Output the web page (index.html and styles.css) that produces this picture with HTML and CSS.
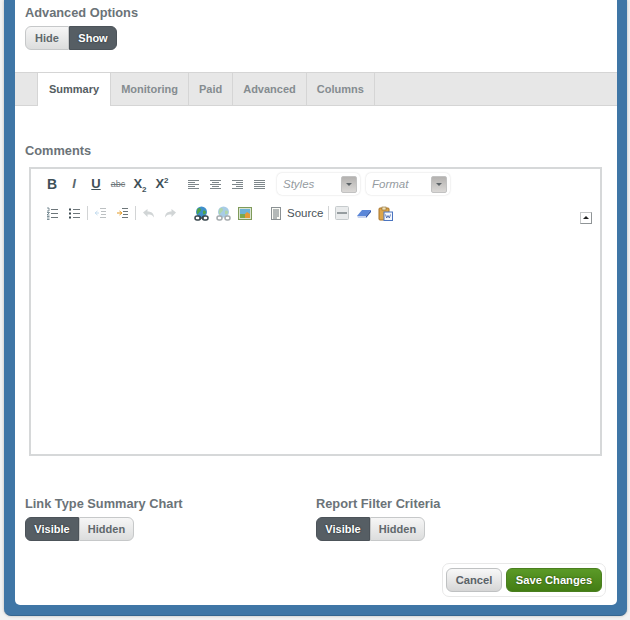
FILE: index.html
```html
<!DOCTYPE html>
<html>
<head>
    <title>Edit Report</title>
    <link rel="stylesheet" href="styles.css">
</head>
<body>
    <div class="frame">
        <div class="panel">
            <div class="field-label">Advanced Options</div>
            <div class="toggle">
                <span class="toggle-btn btn-hide">Hide</span>
                <span class="toggle-btn btn-show active">Show</span>
            </div>

            <div class="tabs">
                <span class="tab-spacer"></span>
                <span class="tab current">Summary</span>
                <span class="tab">Monitoring</span>
                <span class="tab">Paid</span>
                <span class="tab">Advanced</span>
                <span class="tab">Columns</span>
            </div>

            <div class="field-label comments-label">Comments</div>
            <div class="editor">
                <div class="toolbar-row">
                    <div class="tool-group">
                        <span class="tool fmt fmt-b">B</span>
                        <span class="tool fmt fmt-i">I</span>
                        <span class="tool fmt fmt-u">U</span>
                        <span class="tool fmt fmt-s">abc</span>
                        <span class="tool fmt">X<sub>2</sub></span>
                        <span class="tool fmt">X<sup>2</sup></span>
                    </div>
                    <div class="tool-group">
                        <span class="tool"><svg width="13" height="11" viewBox="0 0 13 11"><path d="M1 1.500h11M1 3.500h7M1 5.500h11M1 7.500h7M1 9.500h11" stroke="#7d868a"/></svg></span>
                        <span class="tool"><svg width="13" height="11" viewBox="0 0 13 11"><path d="M1 1.500h11M3 3.500h7M1 5.500h11M3 7.500h7M1 9.500h11" stroke="#7d868a"/></svg></span>
                        <span class="tool"><svg width="13" height="11" viewBox="0 0 13 11"><path d="M1 1.500h11M5 3.500h7M1 5.500h11M5 7.500h7M1 9.500h11" stroke="#7d868a"/></svg></span>
                        <span class="tool"><svg width="13" height="11" viewBox="0 0 13 11"><path d="M1 1.500h11M1 3.500h11M1 5.500h11M1 7.500h11M1 9.500h11" stroke="#7d868a"/></svg></span>
                    </div>
                    <div class="combo combo-styles"><span class="combo-text">Styles</span><span class="combo-arrow"></span></div>
                    <div class="combo combo-format"><span class="combo-text">Format</span><span class="combo-arrow"></span></div>
                </div>
                <div class="toolbar-row second">
                    <div class="tool-group">
                        <span class="tool"><svg width="13" height="13" viewBox="0 0 13 13"><path d="M5 2.500h7M5 6.500h7M5 10.500h7" stroke="#6d767a"/><path d="M1 1h2v3H1M1 5.500h2.500L1 8h2.500M1 9.500h2.500M1 11h2.500M1 12.500h2.500" stroke="#47636f" stroke-width=".7" fill="none"/></svg></span>
                        <span class="tool"><svg width="13" height="13" viewBox="0 0 13 13"><path d="M5 2.500h7M5 6.500h7M5 10.500h7" stroke="#6d767a"/><path d="M1 1.500h2v2H1zM1 5.500h2v2H1zM1 9.500h2v2H1z" fill="#3d4a50"/></svg></span>
                        <span class="sep"></span>
                        <span class="tool faded"><svg width="13" height="12" viewBox="0 0 13 12"><path d="M6 1.500h6M7 4.500h5M7 7.500h5M6 10.500h6" stroke="#6d767a"/><path d="M5 6H2M3.500 4 1 6l2.500 2" stroke="#7fb4dc" fill="none"/></svg></span>
                        <span class="tool"><svg width="13" height="12" viewBox="0 0 13 12"><path d="M6 1.500h6M7 4.500h5M7 7.500h5M6 10.500h6" stroke="#6d767a"/><path d="M1 6h4M3.500 4 6 6 3.500 8" stroke="#e39a25" fill="none"/></svg></span>
                        <span class="sep"></span>
                        <span class="tool faded"><svg width="13" height="11" viewBox="0 0 13 11"><path d="M1 4.500 5.500 1v2.500c4 0 6.500 2 6.500 6-1.500-2.500-3-3-6.500-3V9z" fill="#9aa3a6"/></svg></span>
                        <span class="tool faded"><svg width="13" height="11" viewBox="0 0 13 11"><path d="M12 4.500 7.500 1v2.500c-4 0-6.500 2-6.500 6 1.500-2.500 3-3 6.500-3V9z" fill="#9aa3a6"/></svg></span>
                    </div>
                    <div class="tool-group">
                        <span class="tool"><svg width="15" height="15" viewBox="0 0 15 15"><circle cx="7.500" cy="6" r="5.500" fill="#3f8fca"/><path d="M4 2.500c2-1 3 0 3 1.500S5 6 4 8 2 5 4 2.500zM9 5c2-1 3 0 3 1.500S10 9 9 8z" fill="#4fa34a"/><rect x="1" y="10" width="5.500" height="4" rx="2" fill="none" stroke="#39474d" stroke-width="1.500"/><rect x="8.500" y="10" width="5.500" height="4" rx="2" fill="none" stroke="#39474d" stroke-width="1.500"/><path d="M5 12h5" stroke="#39474d" stroke-width="1.500"/></svg></span>
                        <span class="tool faded"><svg width="15" height="15" viewBox="0 0 15 15"><circle cx="7.500" cy="6" r="5.500" fill="#3f8fca"/><path d="M4 2.500c2-1 3 0 3 1.500S5 6 4 8 2 5 4 2.500zM9 5c2-1 3 0 3 1.500S10 9 9 8z" fill="#4fa34a"/><rect x="1" y="10" width="5" height="4" rx="2" fill="none" stroke="#39474d" stroke-width="1.500"/><rect x="9" y="10" width="5" height="4" rx="2" fill="none" stroke="#39474d" stroke-width="1.500"/></svg></span>
                        <span class="tool"><svg width="14" height="13" viewBox="0 0 14 13"><rect x=".5" y=".5" width="13" height="12" fill="#d9e4d0" stroke="#7f9a5a"/><rect x="2" y="2" width="10" height="5" fill="#6db3d8"/><rect x="2" y="7" width="10" height="4" fill="#7da84e"/><path d="M7 11V7l2-2 3 2v4z" fill="#e59a35"/></svg></span>
                    </div>
                    <div class="tool-group">
                        <span class="tool"><svg width="10" height="13" viewBox="0 0 10 13"><rect x=".5" y=".5" width="9" height="12" fill="#fbfbf6" stroke="#8b9194"/><path d="M2 3h6M2 5h6M2 7h6M2 9h6M2 11h4" stroke="#6d767a"/></svg></span>
                        <span class="source-text">Source</span>
                        <span class="sep sep-source"></span>
                        <span class="tool"><svg width="14" height="14" viewBox="0 0 14 14"><rect x=".5" y=".5" width="13" height="13" rx="1" fill="#e9ebec" stroke="#c6cbcd"/><path d="M2 7h10" stroke="#7a8387" stroke-width="1.500"/></svg></span>
                        <span class="tool"><svg width="16" height="11" viewBox="0 0 16 11"><path d="M1 8 6 2h9L10 8z" fill="#5a86d8"/><path d="M1 8h9v2H2z" fill="#c7d3ee"/><path d="M10 8l5-6v2l-5 6z" fill="#2f55a8"/></svg></span>
                        <span class="tool"><svg width="15" height="15" viewBox="0 0 15 15"><rect x="1" y="2" width="10" height="12" rx="1" fill="#dda54a" stroke="#a8742a"/><rect x="4" y="1" width="4" height="3" fill="#f0e2b8" stroke="#8a6a30" stroke-width=".6"/><rect x="6" y="6" width="8.500" height="8.500" fill="#f4f7fc" stroke="#4a74c0"/><path d="M7.500 8.500l1.200 3.500 1.300-2.500 1.300 2.500 1.200-3.500" stroke="#3c5da5" fill="none" stroke-width=".8"/></svg></span>
                    </div>
                    <span class="collapse"><span class="collapse-arrow"></span></span>
                </div>
            </div>

            <div class="toggle-columns">
                <div class="toggle-field">
                    <div class="field-label">Link Type Summary Chart</div>
                    <div class="toggle">
                        <span class="toggle-btn btn-visible active">Visible</span>
                        <span class="toggle-btn btn-hidden">Hidden</span>
                    </div>
                </div>
                <div class="toggle-field">
                    <div class="field-label">Report Filter Criteria</div>
                    <div class="toggle">
                        <span class="toggle-btn btn-visible active">Visible</span>
                        <span class="toggle-btn btn-hidden">Hidden</span>
                    </div>
                </div>
            </div>

            <div class="actions">
                <div class="action-box">
                    <button class="btn btn-cancel">Cancel</button>
                    <button class="btn btn-save">Save Changes</button>
                </div>
            </div>
        </div>
    </div>
</body>
</html>
```

FILE: styles.css
```css
html, body {
    margin: 0;
    padding: 0;
    height: 620px;
    overflow: hidden;
}
body {
    font-family: "Liberation Sans", Arial, sans-serif;
    background-color: #f1f2f2;
}
.frame {
    margin: 0 3px 0 4px;
    height: 616px;
    box-sizing: border-box;
    padding: 0 10px 10px 11px;
    background-color: #3f76a6;
    border-bottom: 1px solid #356690;
    border-radius: 0 0 7px 7px;
    box-shadow: 0 0 3px rgba(0, 0, 0, 0.25);
}
.panel {
    height: 605px;
    box-sizing: border-box;
    padding-top: 5px;
    background-color: #fff;
    border-radius: 0 0 5px 5px;
    overflow: hidden;
}
.field-label {
    height: 15px;
    line-height: 15px;
    font-size: 12.800px;
    font-weight: bold;
    color: #6b7378;
}
.panel > .field-label {
    margin-left: 10px;
}
.toggle {
    display: inline-flex;
    height: 24px;
    margin-top: 6px;
    margin-left: 10px;
    vertical-align: top;
}
.toggle-btn {
    box-sizing: border-box;
    line-height: 22px;
    text-align: center;
    font-size: 11px;
    font-weight: bold;
    color: #60686c;
    background: linear-gradient(#f6f6f6, #dcdddd);
    border: 1px solid #c6c8c9;
}
.btn-hide {
    width: 44px;
}
.btn-show {
    width: 48px;
}
.btn-visible {
    width: 54px;
}
.btn-hidden {
    width: 55px;
}
.toggle-btn:first-child {
    border-radius: 6px 0 0 6px;
}
.toggle-btn:last-child {
    border-radius: 0 6px 6px 0;
}
.toggle-btn.active {
    color: #fff;
    background: #565e64;
    border-color: #4c5359;
    text-shadow: 0 0 2px #22282c;
}
.tabs {
    display: flex;
    height: 34px;
    box-sizing: border-box;
    margin-top: 22px;
    background-color: #e7e7e7;
    border-top: 1px solid #d5d5d5;
    border-bottom: 1px solid #d5d5d5;
}
.tab-spacer {
    width: 22px;
    border-right: 1px solid #d5d5d5;
}
.tab {
    padding: 0 10px;
    line-height: 32px;
    font-size: 11px;
    font-weight: bold;
    color: #858c90;
    border-right: 1px solid #d5d5d5;
}
.tab.current {
    height: 33px;
    padding: 0 11px;
    color: #555d62;
    background-color: #fff;
}
.comments-label {
    margin-top: 37px;
}
.editor {
    height: 289px;
    box-sizing: border-box;
    margin: 9px 15px 0 14px;
    background-color: #fff;
    border: 2px solid #d6d8d9;
}
.toolbar-row {
    display: flex;
    align-items: center;
    height: 24px;
    margin-top: 3px;
    padding-left: 10px;
}
.toolbar-row.second {
    position: relative;
    margin-top: 5px;
}
.tool-group {
    display: flex;
    align-items: center;
    height: 24px;
    margin-right: 9px;
}
.tool {
    display: flex;
    align-items: center;
    justify-content: center;
    width: 22px;
    height: 22px;
}
.faded {
    opacity: 0.45;
}
.fmt {
    display: block;
    line-height: 22px;
    text-align: center;
    font-size: 13px;
    font-weight: bold;
    color: #3f5058;
}
.fmt sub, .fmt sup {
    font-size: 8px;
    line-height: 0;
}
.fmt-b {
    font-size: 14px;
}
.fmt-i {
    font-style: italic;
    color: #5a676d;
}
.fmt-u {
    text-decoration: underline;
}
.fmt-s {
    font-size: 9px;
    font-weight: normal;
    text-decoration: line-through;
    color: #6d767a;
}
.sep {
    width: 1px;
    height: 14px;
    margin: 0 1.500px;
    background-color: #d2d4d5;
}
.sep-source {
    margin: 0 1.500px 0 5px;
}
.source-text {
    font-size: 11.500px;
    color: #4a5257;
}
.combo {
    display: flex;
    align-items: center;
    justify-content: space-between;
    height: 22px;
    box-sizing: border-box;
    padding: 0 3px 0 6px;
    background-color: #fff;
    border-radius: 5px;
    box-shadow: 0 0 2px rgba(0, 0, 0, 0.18);
}
.combo-styles {
    width: 83px;
    margin-left: -2px;
}
.combo-format {
    width: 84px;
    margin-left: 6px;
}
.combo-text {
    font-size: 11.500px;
    font-style: italic;
    color: #959b9f;
}
.combo-arrow {
    position: relative;
    width: 16px;
    height: 17px;
    border-radius: 2px;
    background: linear-gradient(#b4b2b0, #dad8d6);
    border: 1px solid #c2c2c2;
    box-sizing: border-box;
}
.combo-arrow::after {
    content: "";
    position: absolute;
    left: 4px;
    top: 6px;
    border: 3px solid transparent;
    border-top: 3px solid #5c6367;
}
.collapse {
    position: absolute;
    right: 8px;
    top: 11px;
    width: 12px;
    height: 12px;
    box-sizing: border-box;
    background-color: #fff;
    border: 1px solid #c5c7c8;
    border-bottom-color: #8f9496;
    border-right-color: #8f9496;
}
.collapse-arrow {
    display: block;
    width: 0;
    margin: 3px 0 0 2px;
    border: 3px solid transparent;
    border-bottom: 3px solid #222;
    border-top: 0;
}
.toggle-columns {
    display: flex;
    margin-top: 40px;
}
.toggle-field {
    width: 291px;
}
.toggle-field .field-label {
    margin-left: 10px;
}
.actions {
    display: flex;
    justify-content: flex-end;
    margin-top: 22px;
    padding-right: 11px;
}
.action-box {
    display: flex;
    gap: 4px;
    padding: 4px 3px;
    border: 1px solid #e8e8e8;
    border-radius: 7px;
}
.btn {
    height: 24px;
    padding: 0;
    font-family: inherit;
    font-size: 11.200px;
    font-weight: bold;
    border-radius: 6px;
}
.btn-cancel {
    width: 56px;
    color: #5a6267;
    background: linear-gradient(#f8f8f8, #d6d6d6);
    border: 1px solid #bfc1c2;
}
.btn-save {
    width: 96px;
    color: #fff;
    background: linear-gradient(#5b9a27, #437d14);
    border: 1px solid #4a7f1f;
    text-shadow: 0 0 2px #22400a;
}
```
